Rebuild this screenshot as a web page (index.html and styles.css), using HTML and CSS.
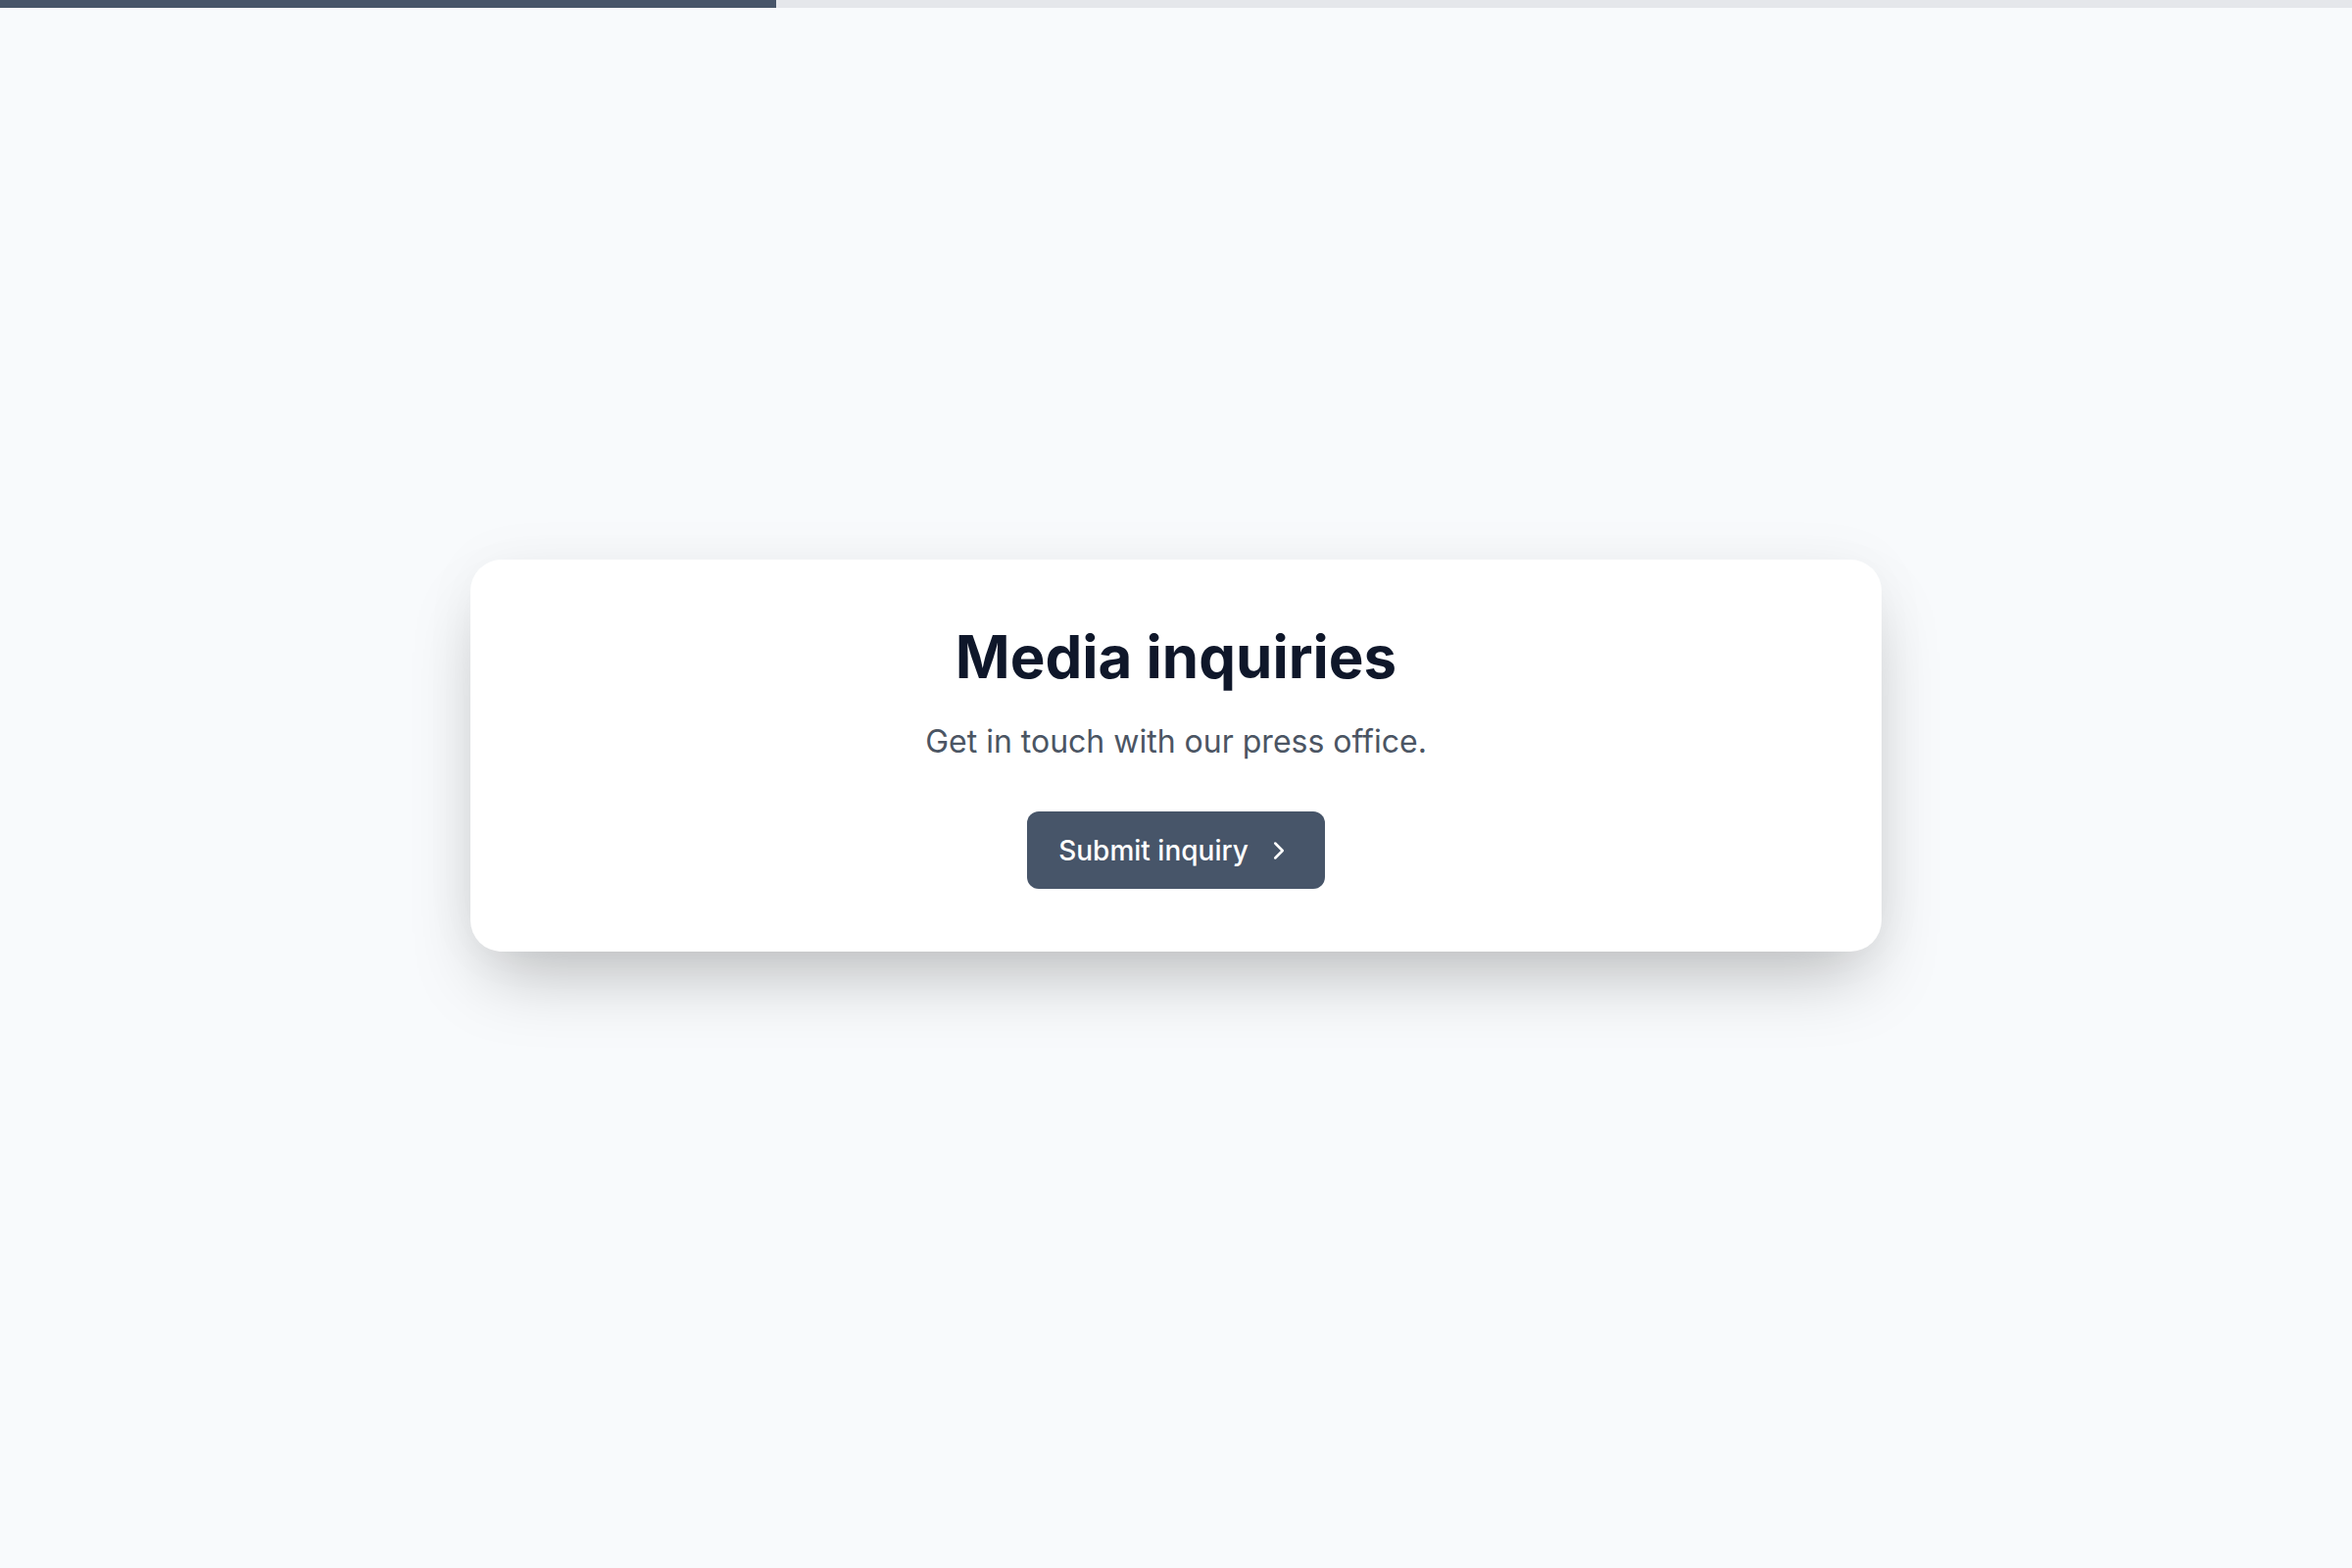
FILE: index.html
```html
<!DOCTYPE html>
<html lang="en">
<head>
<meta charset="utf-8">
<title>Media inquiries</title>
<link rel="stylesheet" href="styles.css">
</head>
<body>
<div class="progress"><div class="progress-fill" style="width:33%"></div></div>
<main class="stage">
  <section class="card">
    <h1 class="title">Media inquiries</h1>
    <p class="subtitle">Get in touch with our press office.</p>
    <button class="btn" type="button">
      <span>Submit inquiry</span>
      <svg class="chev" viewBox="0 0 24 24" fill="none" stroke="currentColor" stroke-width="2" stroke-linecap="round" stroke-linejoin="round"><path d="m9 18 6-6-6-6"/></svg>
    </button>
  </section>
</main>
</body>
</html>
```

FILE: styles.css
```css
* { box-sizing: border-box; }
html, body { margin: 0; padding: 0; }
body {
  background: #f8fafc;
  font-family: Inter, "Noto Sans", sans-serif;
  min-height: 100vh;
  position: relative;
}
.progress {
  position: fixed;
  top: 0; left: 0; right: 0;
  height: 8px;
  background: #e5e7eb;
}
.progress-fill {
  height: 100%;
  background: #475569;
}
.stage {
  height: 100vh;
  display: flex;
  align-items: center;
  justify-content: center;
  padding-bottom: 58px;
}
.card {
  width: 1440px;
  background: #ffffff;
  border-radius: 32px;
  padding: 63px 48px 64px;
  text-align: center;
  box-shadow: 0 38px 75px -18px rgba(0,0,0,0.25), 0 0 60px rgba(15,23,42,0.04);
}
.title {
  margin: 0;
  font-size: 60px;
  line-height: 1.2;
  font-weight: 700;
  color: #0f172a;
}
.subtitle {
  margin: 27px 0 0;
  font-size: 32px;
  line-height: 1.5;
  color: #4b5563;
}
.btn {
  margin-top: 47px;
  display: inline-flex;
  align-items: center;
  gap: 16px;
  height: 79px;
  padding: 0 32px;
  border: 0;
  border-radius: 12px;
  background: #475569;
  color: #ffffff;
  font-family: Inter, "Noto Sans", sans-serif;
  font-size: 28px;
  font-weight: 500;
  cursor: pointer;
}
.chev { width: 30px; height: 30px; }
```
